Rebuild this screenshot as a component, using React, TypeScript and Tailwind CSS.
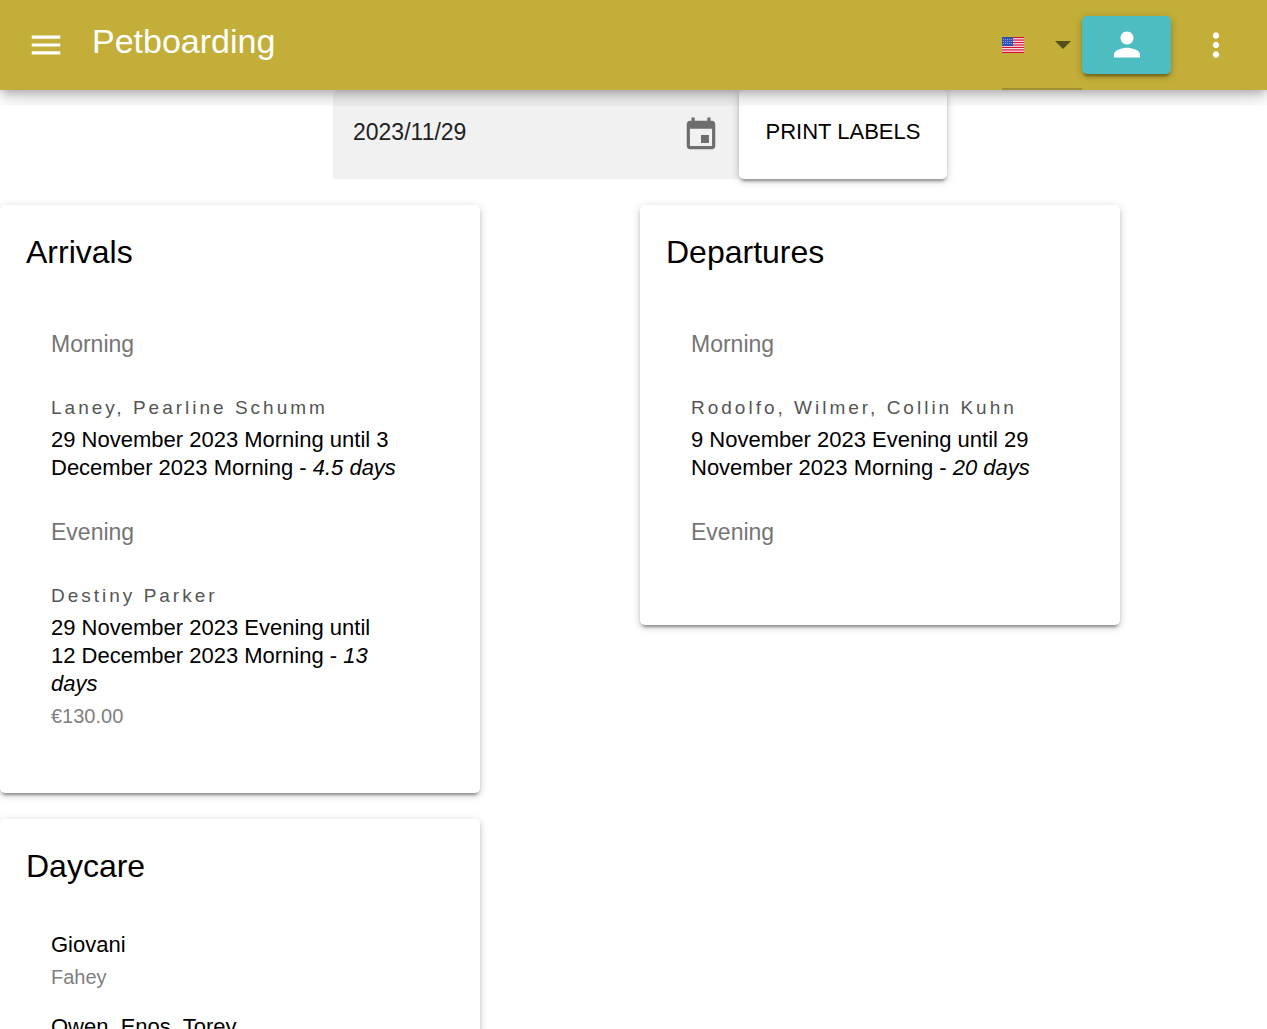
import React, { ReactNode } from "react";

const CARD =
  "w-full max-w-[480px] self-start rounded-[5px] bg-white p-[26px] shadow-[0_5px_2px_-3px_rgba(0,0,0,0.2),0_3px_3px_0_rgba(0,0,0,0.14),0_2px_8px_0_rgba(0,0,0,0.2)]";

function Card({ title, children }: { title: string; children: ReactNode }) {
  return (
    <section className={CARD}>
      <h2 className="text-[32px] leading-[42px]">{title}</h2>
      {children}
    </section>
  );
}

type Stay = { name: string; period: string; days: string; price?: string };

function StayGroup({ label, stays }: { label: string; stays: Stay[] }) {
  return (
    <div className="pt-2">
      <h3 className="mb-4 text-[23px] leading-9 text-[#757575]">{label}</h3>
      <ul className="py-3">
        {stays.map((s) => (
          <li key={s.name} className="pb-3">
            <p className="text-[19px] leading-9 tracking-[3px] text-[#555]">{s.name}</p>
            <p className="text-[22px] leading-7">
              {s.period} - <em>{s.days}</em>
            </p>
            {s.price && <p className="text-[20px] leading-9 text-[#808080]">{s.price}</p>}
          </li>
        ))}
      </ul>
    </div>
  );
}

function Stays({ morning, evening }: { morning: Stay[]; evening: Stay[] }) {
  return (
    <div className="pt-[45px] pr-[56px] pb-[9px] pl-[25px]">
      <StayGroup label="Morning" stays={morning} />
      <StayGroup label="Evening" stays={evening} />
    </div>
  );
}

function Flag() {
  return (
    <svg viewBox="0 0 22 16" className="h-4 w-[22px]" aria-hidden="true">
      <rect width="22" height="16" fill="#f5f0f0" />
      {[0, 1, 2, 3, 4, 5, 6].map((i) => (
        <rect key={i} y={(i * 32) / 13} width="22" height={16 / 13} fill="#d80f34" />
      ))}
      <rect width="11" height="9" fill="#2e52b2" />
      {[1, 3, 5, 7, 9].map((x) =>
        [2, 4, 6].map((y) => <rect key={`${x}-${y}`} x={x} y={y} width="1" height="1" fill="#8ea4dc" />)
      )}
    </svg>
  );
}

const daycare = [
  { pets: "Giovani", owner: "Fahey" },
  { pets: "Owen, Enos, Torey", owner: "" },
];

export default function App() {
  return (
    <div className="h-screen overflow-hidden bg-white font-['Liberation_Sans',Arial,sans-serif] text-black">
      <header className="relative z-10 flex h-[90px] items-center bg-[#c2ae38] pr-[32px] pl-[27px] text-white shadow-[0_4px_8px_-2px_rgba(0,0,0,0.2),0_8px_14px_0_rgba(0,0,0,0.12),0_2px_24px_0_rgba(0,0,0,0.1)] [clip-path:inset(0_0_-16px_0)]">
        <button aria-label="Menu" className="size-[38px]">
          <svg viewBox="0 0 24 24" className="size-[38px]" fill="currentColor">
            <path d="M3 18h18v-2H3v2zm0-5h18v-2H3v2zm0-7v2h18V6H3z" />
          </svg>
        </button>
        <h1 className="ml-[27px] pb-2 text-[34px] leading-10">Petboarding</h1>
        <div className="relative ml-auto flex h-[90px] w-20 items-center justify-between border-b-2 border-[#9f8f2f] pt-[2px] pr-[11px]">
          <Flag />
          <svg viewBox="0 0 16 8" className="h-2 w-4" fill="#574f1a" aria-hidden="true">
            <path d="M0 0h16L8 8z" />
          </svg>
          <select aria-label="Language" className="absolute inset-0 opacity-0">
            <option>English</option>
          </select>
        </div>
        <button
          aria-label="Account"
          className="flex h-[58px] w-[89px] items-center justify-center rounded-[5px] bg-[#4dbdc1] shadow-[0_5px_2px_-3px_rgba(0,0,0,0.2),0_3px_3px_0_rgba(0,0,0,0.14),0_2px_8px_0_rgba(0,0,0,0.2)]"
        >
          <svg viewBox="0 0 24 24" className="size-10 pb-px" fill="currentColor">
            <path d="M12 12c2.210 0 4-1.790 4-4s-1.790-4-4-4-4 1.790-4 4 1.790 4 4 4zm0 2c-2.670 0-8 1.340-8 4v2h16v-2c0-2.660-5.330-4-8-4z" />
          </svg>
        </button>
        <button aria-label="More options" className="ml-[26px] size-[38px]">
          <svg viewBox="0 0 24 24" className="size-[38px]" fill="currentColor">
            <path d="M12 8c1.100 0 2-.9 2-2s-.9-2-2-2-2 .9-2 2 .9 2 2 2zm0 2c-1.100 0-2 .9-2 2s.9 2 2 2 2-.9 2-2-.9-2-2-2zm0 6c-1.100 0-2 .9-2 2s.9 2 2 2 2-.9 2-2-.9-2-2-2z" />
          </svg>
        </button>
      </header>

      <main>
        <div className="flex justify-center pl-[13px]">
          <div className="flex h-[89px] w-[406px] items-center rounded-tl-[6px] bg-[#f1f1f1] pr-[19px] pl-5">
            <input
              aria-label="Date"
              defaultValue="2023/11/29"
              className="h-[58px] min-w-0 flex-1 bg-transparent pb-1 text-[23px] text-[#212121] outline-none"
            />
            <button aria-label="Choose date" className="size-[38px]">
              <svg viewBox="0 0 24 24" className="size-[38px]" fill="#6d6d6d">
                <path d="M17 12h-5v5h5v-5zM16 1v2H8V1H6v2H5c-1.110 0-1.990.9-1.990 2L3 19c0 1.100.89 2 2 2h14c1.100 0 2-.9 2-2V5c0-1.100-.9-2-2-2h-1V1h-2zm3 18H5V8h14v11z" />
              </svg>
            </button>
          </div>
          <button className="h-[89px] w-[208px] rounded-[5px] bg-white pb-[6px] text-[22px] shadow-[0_5px_2px_-3px_rgba(0,0,0,0.2),0_3px_3px_0_rgba(0,0,0,0.14),0_2px_8px_0_rgba(0,0,0,0.2)]">
            PRINT LABELS
          </button>
        </div>

        <div className="mt-[26px] grid grid-cols-2 gap-x-[13px] gap-y-[26px]">
          <Card title="Arrivals">
            <Stays
              morning={[
                {
                  name: "Laney, Pearline Schumm",
                  period: "29 November 2023 Morning until 3 December 2023 Morning",
                  days: "4.5 days",
                },
              ]}
              evening={[
                {
                  name: "Destiny Parker",
                  period: "29 November 2023 Evening until 12 December 2023 Morning",
                  days: "13 days",
                  price: "€130.00",
                },
              ]}
            />
          </Card>
          <Card title="Departures">
            <Stays
              morning={[
                {
                  name: "Rodolfo, Wilmer, Collin Kuhn",
                  period: "9 November 2023 Evening until 29 November 2023 Morning",
                  days: "20 days",
                },
              ]}
              evening={[]}
            />
          </Card>
          <Card title="Daycare">
            <ul className="flex flex-col gap-[18px] pt-[44px] pl-[25px]">
              {daycare.map((d) => (
                <li key={d.pets}>
                  <p className="text-[22px] leading-7">{d.pets}</p>
                  <p className="min-h-9 text-[20px] leading-9 text-[#808080]">{d.owner}</p>
                </li>
              ))}
            </ul>
          </Card>
        </div>
      </main>
    </div>
  );
}
